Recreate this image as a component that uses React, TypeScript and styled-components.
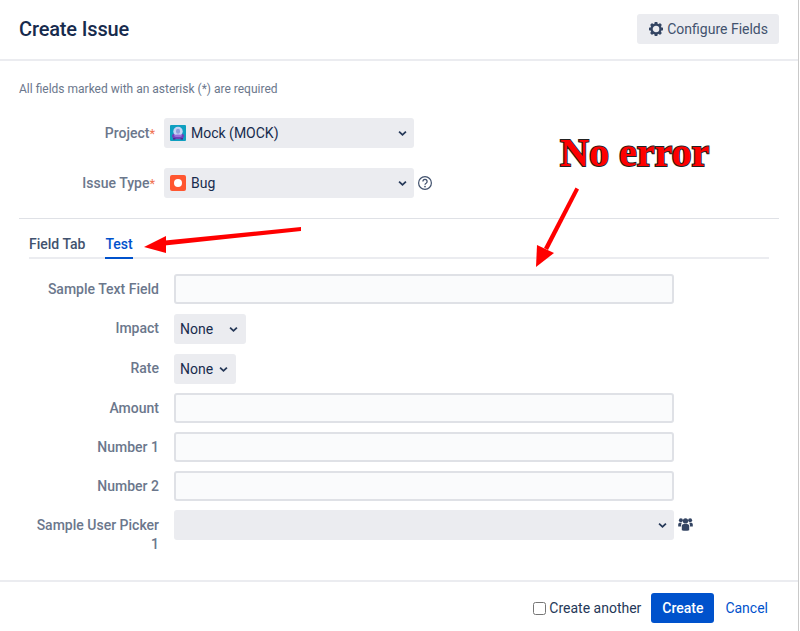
import React from 'react';
import styled, {createGlobalStyle} from 'styled-components';

const fields = [
    {label: 'Sample Text Field', kind: 'input', gap: 10},
    {label: 'Impact', kind: 'select', width: 72, gap: 10},
    {label: 'Rate', kind: 'select', width: 62, gap: 9},
    {label: 'Amount', kind: 'input', gap: 9},
    {label: 'Number 1', kind: 'input', gap: 9},
    {label: 'Number 2', kind: 'input', gap: 9},
];

function Chevron() {
    return (
        <ChevronSvg viewBox="0 0 10 7">
            <polyline points="1.2,1.4 5,5 8.8,1.4" fill="none" stroke="#253858" strokeWidth="2"/>
        </ChevronSvg>
    );
}

function GearIcon() {
    return (
        <GearSvg viewBox="0 0 14 14">
            <circle cx="7" cy="7" r="4.5" fill="none" stroke="#344563" strokeWidth="2.4"/>
            {[0, 45, 90, 135, 180, 225, 270, 315].map((angle) => (
                <rect key={angle} x="5.6" y="0" width="2.8" height="2.4" fill="#344563" transform={`rotate(${angle} 7 7)`}/>
            ))}
        </GearSvg>
    );
}

function GroupIcon() {
    return (
        <GroupSvg viewBox="0 0 15 14">
            <circle cx="2.9" cy="3.2" r="2" fill="#344563"/>
            <circle cx="12.1" cy="3.2" r="2" fill="#344563"/>
            <circle cx="7.5" cy="3.9" r="2.6" fill="#344563"/>
            <path d="M.2 9.6V7.4C.2 6.4 1 5.7 2 5.7h2c-.6.7-.9 1.5-.9 2.4v1.5z" fill="#344563"/>
            <path d="M14.8 9.6V7.4c0-1-.8-1.7-1.8-1.7h-2c.6.7.9 1.5.9 2.4v1.5z" fill="#344563"/>
            <path d="M3.8 13.2V9c0-1.2 1-2.1 2.1-2.1h3.2c1.1 0 2.1.9 2.1 2.1v4.2c-2.4.8-5 .8-7.4 0z" fill="#344563"/>
        </GroupSvg>
    );
}

function ProjectAvatar() {
    return (
        <AvatarSvg viewBox="0 0 16 16">
            <rect width="16" height="16" rx="1" fill="#0e9fc0"/>
            <ellipse cx="8" cy="11" rx="6.2" ry="3.2" fill="#6f42b8"/>
            <circle cx="8" cy="6.4" r="4.7" fill="#c6d3f4"/>
            <rect x="6" y="3.8" width="4" height="5" rx="2" fill="#8f9fdc"/>
            <ellipse cx="8" cy="10.8" rx="4" ry="1.2" fill="#9a6fdc"/>
            <rect x="3" y="13" width="2.4" height="1.6" fill="#4f2a96"/>
            <rect x="10.6" y="13" width="2.4" height="1.6" fill="#4f2a96"/>
        </AvatarSvg>
    );
}

function BugIcon() {
    return (
        <AvatarSvg viewBox="0 0 16 16">
            <rect width="16" height="16" rx="2" fill="#ff5630"/>
            <circle cx="8" cy="8" r="4" fill="#ffffff"/>
        </AvatarSvg>
    );
}

function HelpIcon() {
    return (
        <HelpSvg viewBox="0 0 16 16">
            <circle cx="8" cy="8" r="6.4" fill="none" stroke="#42526e" strokeWidth="1.2"/>
            <path d="M5.9 6.4a2.1 2.1 0 1 1 3.2 1.8c-.7.4-1.1.8-1.1 1.6" fill="none" stroke="#42526e" strokeWidth="1.3"/>
            <circle cx="8" cy="11.6" r=".85" fill="#42526e"/>
        </HelpSvg>
    );
}

export default function App() {
    return (
        <Dialog>
            <GlobalStyle/>
            <Header>
                <Title>Create Issue</Title>
                <ConfigureButton type="button"><GearIcon/>Configure Fields</ConfigureButton>
            </Header>
            <Body>
                <Note>All fields marked with an asterisk (*) are required</Note>
                <TopRow>
                    <TopLabel>Project<Required>*</Required></TopLabel>
                    <SelectBox $width={250}>
                        <ProjectAvatar/>
                        <SelectText>Mock (MOCK)</SelectText>
                        <Chevron/>
                    </SelectBox>
                </TopRow>
                <TopRow>
                    <TopLabel>Issue Type<Required>*</Required></TopLabel>
                    <SelectBox $width={250}>
                        <BugIcon/>
                        <SelectText>Bug</SelectText>
                        <Chevron/>
                    </SelectBox>
                    <HelpIcon/>
                </TopRow>
                <Divider/>
                <TabPane>
                    <TabList>
                        <Tab>Field Tab</Tab>
                        <Tab $active>Test</Tab>
                    </TabList>
                    {fields.map((field) => (
                        <FieldRow key={field.label} $gap={field.gap}>
                            <FieldLabel $top={field.kind === 'input' ? 6 : 5}>{field.label}</FieldLabel>
                            {field.kind === 'input' ? (
                                <TextInput type="text"/>
                            ) : (
                                <SmallSelect $width={field.width ?? 72}>
                                    <SelectText>None</SelectText>
                                    <Chevron/>
                                </SmallSelect>
                            )}
                        </FieldRow>
                    ))}
                    <FieldRow $gap={0}>
                        <FieldLabel $top={6}>Sample User Picker 1</FieldLabel>
                        <SelectBox $width={500}>
                            <SelectText/>
                            <Chevron/>
                        </SelectBox>
                        <GroupIcon/>
                    </FieldRow>
                </TabPane>
            </Body>
            <Footer>
                <CheckLabel>
                    <input type="checkbox"/>
                    Create another
                </CheckLabel>
                <CreateButton type="button">Create</CreateButton>
                <CancelLink href="#">Cancel</CancelLink>
            </Footer>

            <Annotation>No error</Annotation>
            <ArrowLayer viewBox="0 0 800 631">
                <polygon points="301,227 301,231 160,246 160,241" fill="#ff0000"/>
                <polygon points="144,247 166,236 166,253" fill="#ff0000"/>
                <polygon points="575.5,187.5 579,189.5 548,250 544,248" fill="#ff0000"/>
                <polygon points="536,267 537,245 554,253" fill="#ff0000"/>
            </ArrowLayer>
        </Dialog>
    );
}

const GlobalStyle = createGlobalStyle`
    html, body {
        margin: 0;
        padding: 0;
        background: #ffffff;
    }

    * {
        box-sizing: border-box;
    }
`;

const Dialog = styled.div`
    position: relative;
    display: flex;
    flex-direction: column;
    width: 799px;
    height: 631px;
    overflow: hidden;
    border-right: 1px solid #c9c9c9;
    background: #ffffff;
    font-family: Roboto, "Liberation Sans", sans-serif;
    font-size: 14px;
    color: #172b4d;
`;

const Header = styled.div`
    display: flex;
    align-items: center;
    justify-content: space-between;
    height: 61px;
    padding: 0 19px 2px 19px;
    border-bottom: 2px solid #ebecf0;
`;

const Title = styled.h2`
    margin: 0;
    font-size: 20px;
    font-weight: 500;
    letter-spacing: -0.15px;
    color: #172b4d;
`;

const ConfigureButton = styled.button`
    display: flex;
    align-items: center;
    gap: 4px;
    height: 30px;
    padding: 0 11px 0 12px;
    border: 0;
    border-radius: 3px;
    background: #ebecf0;
    font-family: inherit;
    font-size: 14px;
    color: #42526e;
`;

const GearSvg = styled.svg`
    flex: none;
    width: 14px;
    height: 14px;
`;

const Body = styled.div`
    flex: 1;
    padding: 0 19px;
`;

const Note = styled.p`
    margin: 21px 0 21px;
    font-size: 12px;
    line-height: 15px;
    color: #6b778c;
`;

const TopRow = styled.div`
    display: flex;
    align-items: center;
    height: 30px;
    margin-bottom: 20px;
`;

const TopLabel = styled.label`
    width: 136px;
    margin-right: 9px;
    text-align: right;
    font-weight: 500;
    color: #6b778c;
`;

const Required = styled.span`
    font-size: 13px;
    font-weight: 400;
    color: #f0704f;
`;

const SelectBox = styled.div<{ $width: number }>`
    display: flex;
    align-items: center;
    gap: 5px;
    flex: none;
    width: ${(props) => props.$width}px;
    height: 30px;
    padding: 0 7px 0 6px;
    border-radius: 3px;
    background: #ebecf0;
`;

const SmallSelect = styled(SelectBox)`
    gap: 0;
    padding-right: 8px;
`;

const SelectText = styled.span`
    flex: 1;
    color: #172b4d;
`;

const ChevronSvg = styled.svg`
    flex: none;
    width: 9px;
    height: 7px;
`;

const AvatarSvg = styled.svg`
    flex: none;
    width: 16px;
    height: 16px;
`;

const HelpSvg = styled.svg`
    flex: none;
    width: 16px;
    height: 16px;
    margin-left: 3px;
`;

const Divider = styled.hr`
    height: 1px;
    margin: 0 0 8px;
    border: 0;
    background: #dfe1e6;
`;

const TabPane = styled.div`
    padding: 0 10px;
`;

const TabList = styled.div`
    display: flex;
    gap: 20px;
    height: 32px;
    margin-bottom: 15px;
    border-bottom: 2px solid #ebecf0;
`;

const Tab = styled.div<{ $active?: boolean }>`
    height: 32px;
    padding-top: 7px;
    line-height: 20px;
    font-weight: 500;
    color: ${(props) => (props.$active ? '#0052cc' : '#42526e')};
    border-bottom: 2px solid ${(props) => (props.$active ? '#0052cc' : 'transparent')};
`;

const FieldRow = styled.div<{ $gap: number }>`
    display: flex;
    align-items: flex-start;
    margin-bottom: ${(props) => props.$gap}px;
`;

const FieldLabel = styled.label<{ $top: number }>`
    width: 130px;
    margin-right: 15px;
    padding-top: ${(props) => props.$top}px;
    line-height: 19px;
    text-align: right;
    font-weight: 500;
    color: #6b778c;
`;

const TextInput = styled.input`
    width: 500px;
    height: 30px;
    border: 2px solid #dfe1e6;
    border-radius: 3px;
    background: #fafbfc;
`;

const GroupSvg = styled.svg`
    flex: none;
    width: 15px;
    height: 14px;
    margin: 7px 0 0 4px;
`;

const Footer = styled.div`
    display: flex;
    align-items: center;
    justify-content: flex-end;
    height: 51px;
    padding: 3px 30px 0 0;
    border-top: 2px solid #ebecf0;
`;

const CheckLabel = styled.label`
    display: flex;
    align-items: center;
    color: #253858;

    input {
        width: 13px;
        height: 13px;
        margin: 0 3px 0 0;
    }
`;

const CreateButton = styled.button`
    width: 63px;
    height: 30px;
    margin: 0 11px 0 10px;
    border: 0;
    border-radius: 3px;
    background: #0052cc;
    font-family: inherit;
    font-size: 14px;
    font-weight: 500;
    color: #ffffff;
`;

const CancelLink = styled.a`
    color: #0052cc;
    text-decoration: none;
`;

const Annotation = styled.div`
    position: absolute;
    top: 130px;
    left: 560px;
    font-family: "Liberation Serif", serif;
    font-size: 40px;
    font-weight: 700;
    line-height: 46px;
    color: #ff0000;
    -webkit-text-stroke: 2px #222222;
    paint-order: stroke fill;
    white-space: nowrap;
`;

const ArrowLayer = styled.svg`
    position: absolute;
    top: 0;
    left: 0;
    width: 800px;
    height: 631px;
    pointer-events: none;
`;
